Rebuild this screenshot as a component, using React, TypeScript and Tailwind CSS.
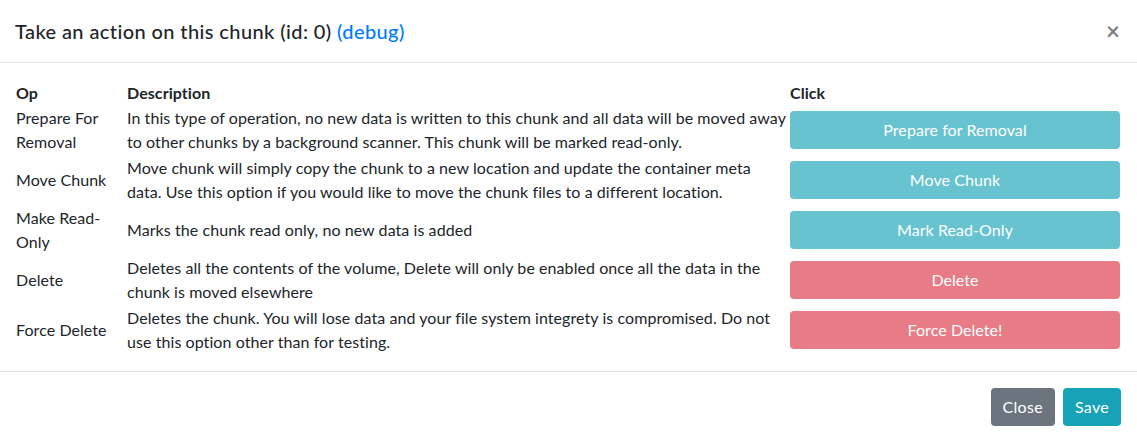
const rows = [
  {
    op: "Prepare For Removal",
    desc: "In this type of operation, no new data is written to this chunk and all data will be moved away to other chunks by a background scanner. This chunk will be marked read-only.",
    label: "Prepare for Removal",
    danger: false,
  },
  {
    op: "Move Chunk",
    desc: "Move chunk will simply copy the chunk to a new location and update the container meta data. Use this option if you would like to move the chunk files to a different location.",
    label: "Move Chunk",
    danger: false,
  },
  {
    op: "Make Read-Only",
    desc: "Marks the chunk read only, no new data is added",
    label: "Mark Read-Only",
    danger: false,
  },
  {
    op: "Delete",
    desc: "Deletes all the contents of the volume, Delete will only be enabled once all the data in the chunk is moved elsewhere",
    label: "Delete",
    danger: true,
  },
  {
    op: "Force Delete",
    desc: "Deletes the chunk. You will lose data and your file system integrety is compromised. Do not use this option other than for testing.",
    label: "Force Delete!",
    danger: true,
  },
];

export default function App() {
  return (
    <main className="w-[1137px] h-[442px] bg-white text-[#212529] font-['Lato',sans-serif] text-base leading-6 tracking-[0.07px] overflow-hidden">
      <header className="h-[63px] flex items-center justify-between pl-[15px] pr-[16px] border-b border-[#dee2e6]">
        <h5 className="text-[20px] leading-[30px] font-medium tracking-[0.4px]">
          Take an action on this chunk (id: 0){" "}
          <a className="text-[#007bff]">(debug)</a>
        </h5>
        <button className="text-[24px] leading-none font-bold text-black/50 pr-px">×</button>
      </header>
      <section className="px-4 pt-[18px] h-[309px] border-b border-[#dee2e6]">
        <div className="grid grid-cols-[111px_663px_331px]">
          <div className="font-bold leading-6">Op</div>
          <div className="font-bold leading-6">Description</div>
          <div className="font-bold leading-6">Click</div>
          {rows.map((r) => (
            <Row key={r.op} {...r} />
          ))}
        </div>
      </section>
      <footer className="h-[70px] flex items-center justify-end gap-2 pr-4">
        <button className="h-[38px] px-3 rounded bg-[#6c757d] text-white tracking-[0.3px]">Close</button>
        <button className="h-[38px] px-3 rounded bg-[#17a2b8] text-white tracking-[0.3px]">Save</button>
      </footer>
    </main>
  );
}

type RowProps = {
  op: string;
  desc: string;
  label: string;
  danger: boolean;
};

function Row({ op, desc, label, danger }: RowProps) {
  return (
    <>
      <div className="h-[50px] flex items-center">{op}</div>
      <div className="h-[50px] flex items-center pr-1">{desc}</div>
      <div className="h-[50px] flex items-center">
        <button
          className={
            danger
              ? "w-[330px] h-[38px] rounded bg-[#e87c86] text-white"
              : "w-[330px] h-[38px] rounded bg-[#68c3d1] text-white"
          }
        >
          {label}
        </button>
      </div>
    </>
  );
}
